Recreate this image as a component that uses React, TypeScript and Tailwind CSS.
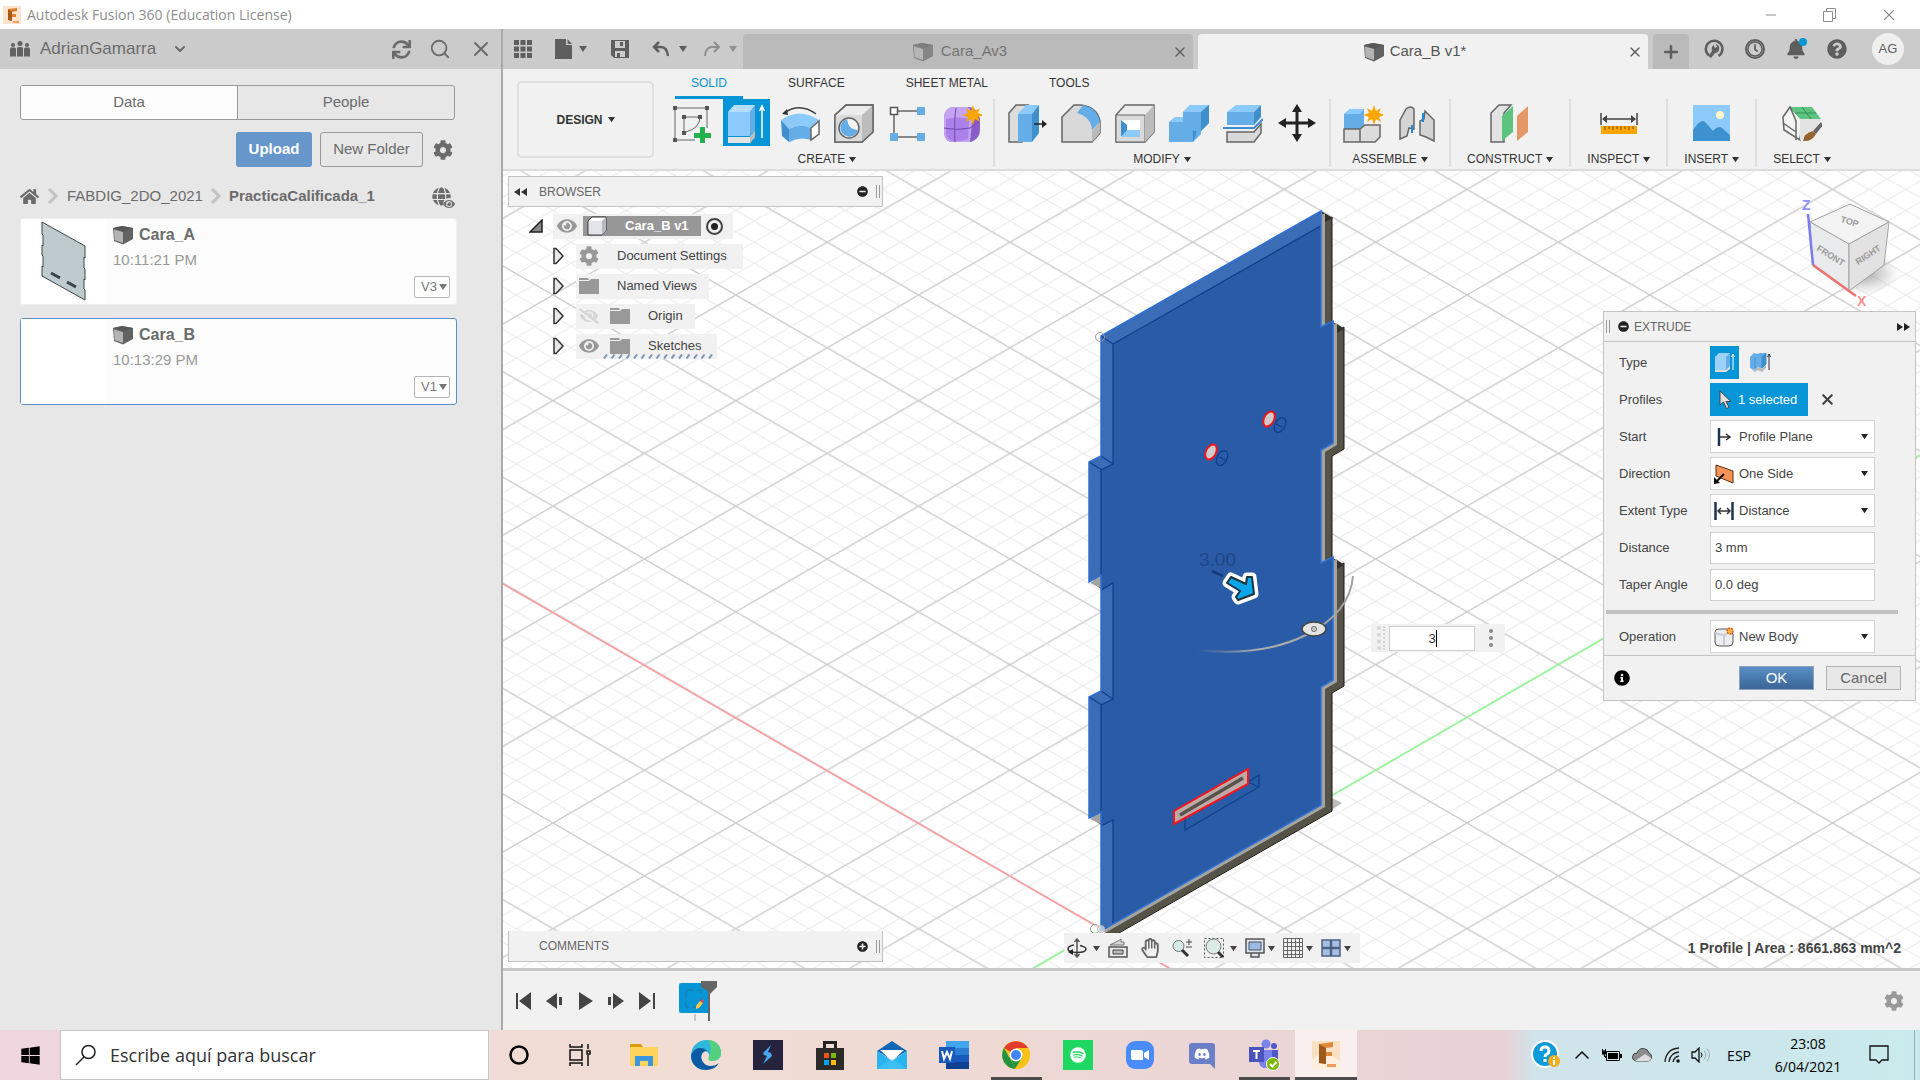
import type { ReactNode } from 'react'
import { ChevronDown, ChevronUp, Minus, Plus, Search, X } from 'lucide-react'
import {
  FaBell,
  FaCog,
  FaDiscord,
  FaEye,
  FaEyeSlash,
  FaGlobe,
  FaHome,
  FaInfoCircle,
  FaMinusCircle,
  FaPlusCircle,
  FaQuestionCircle,
  FaRegClock,
  FaRegHandPaper,
  FaSpotify,
  FaSync,
  FaWindows,
} from 'react-icons/fa'

type IconProps = { children: ReactNode; className?: string; box?: string }

function Icon({ children, className = 'size-10', box = '0 0 40 40' }: IconProps) {
  return (
    <svg viewBox={box} className={`shrink-0 ${className}`} fill="none" aria-hidden="true">
      {children}
    </svg>
  )
}

function Caret({ className = 'w-2 h-2' }: { className?: string }) {
  return (
    <Icon box="0 0 8 8" className={className}>
      <path d="M0 1h8L4 7z" fill="currentColor" />
    </Icon>
  )
}

function Cube({ className = 'size-5' }: { className?: string }) {
  return (
    <Icon box="0 0 20 20" className={className}>
      <path d="M0 3L9 1l11 2v11l-10 5.500L1 16z" fill="#626262" />
      <path d="M1 4.500l9 2.500v11L1.500 15z" fill="#b4b4b4" />
      <path d="M0 3l10 3.500L20 3 9 1z" fill="#575757" />
    </Icon>
  )
}

function Folder() {
  return (
    <Icon box="0 0 20 16" className="w-5 h-4">
      <path d="M0 0h9l1 2H0zM0 3h10l2-2h8v15H0z" fill="#999" />
    </Icon>
  )
}

function TitleBar() {
  return (
    <header className="flex h-[29px] shrink-0 items-center bg-white pl-[3px] text-[#8e8e8e]">
      <Icon box="0 0 18 18" className="size-[18px]">
        <path d="M0 0h18v18H0z" fill="#fbe3cd" />
        <path d="M5 3l9-1v3l-5 1v2h4v3H9v4l-4-1z" fill="#d9822f" />
        <path d="M5 3l4 3v9l-4-1z" fill="#a85a17" />
        <path d="M10 15h6v2h-6z" fill="#f0a35c" />
      </Icon>
      <h1 className="ml-[6px] font-['Open_Sans',sans-serif] text-[14px]">Autodesk Fusion 360 (Education License)</h1>
      <div className="ml-auto flex items-center">
        <button aria-label="Minimize" className="flex w-[58px] justify-center">
          <Minus className="size-4" strokeWidth={1.5} />
        </button>
        <button aria-label="Restore" className="flex w-[58px] justify-center">
          <Icon box="0 0 14 14" className="size-[14px]">
            <path d="M1.500 3.500h9v10h-9zM4.500 3V.5h9v10H11" stroke="currentColor" />
          </Icon>
        </button>
        <button aria-label="Close" className="flex w-[62px] justify-center">
          <X className="size-[18px]" strokeWidth={1.5} />
        </button>
      </div>
    </header>
  )
}

function FileCard({ name, time, version, active, children }: {
  name: string
  time: string
  version: string
  active?: boolean
  children?: ReactNode
}) {
  return (
    <article
      className={`flex h-[87px] rounded-[3px] border bg-[#fcfcfc] ${active ? 'border-[#5b8fce]' : 'border-[#eeeeee]'}`}
    >
      <div className="w-[86px] shrink-0 bg-white">{children}</div>
      <div className="flex flex-1 flex-col pt-[5px] pl-[6px]">
        <h2 className="flex items-center gap-[6px] text-[16px] leading-[22px] font-bold text-[#6b6b6b]">
          <Cube />
          {name}
        </h2>
        <p className="mt-[3px] text-[15px] leading-[22px] text-[#999]">{time}</p>
        <button className="mt-auto mr-[6px] mb-[6px] flex h-[22px] w-9 items-center justify-end gap-[2px] self-end rounded-[2px] border border-[#b5b5b5] bg-white pr-[2px] text-[13px] text-[#777]">
          {version}
          <Caret className="size-2" />
        </button>
      </div>
    </article>
  )
}

function DataPanel() {
  return (
    <aside className="flex w-[503px] shrink-0 flex-col border-r-2 border-[#a9a9a9] bg-[#e7e7e7] text-[#6b6b6b]">
      <div className="flex h-10 items-center bg-[#cbcbcb] pr-2 pl-[10px]">
        <Icon box="0 0 20 16" className="h-4 w-5">
          <g fill="#626262">
            <circle cx="3" cy="4" r="2" />
            <circle cx="10" cy="2.500" r="2.500" />
            <circle cx="17" cy="4" r="2" />
            <path d="M0 8q0-1.500 1.500-1.500h3Q6 6.500 6 8v7.500H0zM7 7.500Q7 6 8.500 6h3Q13 6 13 7.500v8H7zM14 8q0-1.500 1.500-1.500h3Q20 6.500 20 8v7.500h-6z" />
          </g>
        </Icon>
        <button className="ml-[10px] flex items-center gap-3 text-[17px]">
          AdrianGamarra
          <ChevronDown className="ml-1 size-4" strokeWidth={3} />
        </button>
        <div className="ml-auto flex items-center gap-[18px]">
          <button aria-label="Refresh">
            <FaSync className="size-[19px]" />
          </button>
          <button aria-label="Search">
            <Search className="size-[22px]" strokeWidth={2} />
          </button>
          <button aria-label="Close panel">
            <X className="size-6" strokeWidth={2} />
          </button>
        </div>
      </div>

      <div className="flex flex-col pr-[46px] pl-5">
        <div className="mt-4 flex h-[35px] overflow-hidden rounded-[3px] border border-[#999] text-[15px]">
          <button className="flex-1 border-r border-[#999] bg-[#fcfcfc]">Data</button>
          <button className="flex-1">People</button>
        </div>
        <div className="mt-3 flex items-center justify-end gap-2">
          <button className="h-[35px] w-[76px] rounded-[3px] bg-[#6796cb] text-[15px] font-bold text-white">Upload</button>
          <button className="h-[35px] w-[103px] rounded-[3px] border border-[#999] text-[15px]">New Folder</button>
          <button aria-label="Settings" className="mr-[2px] ml-[2px]">
            <FaCog className="size-5" />
          </button>
        </div>
        <nav className="mt-[17px] flex h-6 items-center text-[15px]">
          <a href="#" aria-label="Home">
            <FaHome className="size-[19px]" />
          </a>
          <Icon box="0 0 12 18" className="mx-2 h-[18px] w-3">
            <path d="M2 2l7 7-7 7" stroke="#c2c2c2" strokeWidth="3" />
          </Icon>
          <a href="#">FABDIG_2DO_2021</a>
          <Icon box="0 0 12 18" className="mx-[7px] h-[18px] w-3">
            <path d="M2 2l7 7-7 7" stroke="#c2c2c2" strokeWidth="3" />
          </Icon>
          <a href="#" className="font-bold">PracticaCalificada_1</a>
          <button aria-label="Open on the web" className="relative mr-1 ml-auto">
            <FaGlobe className="size-[19px]" />
            <FaEye className="absolute -right-1 -bottom-1 size-3 rounded-full bg-[#e7e7e7]" />
          </button>
        </nav>
        <div className="mt-[10px] -mr-[2px] flex flex-col gap-[13px]">
          <FileCard name="Cara_A" time="10:11:21 PM" version="V3">
            <Icon box="0 0 86 85" className="h-[85px] w-[86px]">
              <path
                d="M21 3l43 24v12l-1-1v11l1 1v11l-1-1v10l1 1v10L21 57V47l1 1V37l-1-1V26l1 1V16l-1-1z"
                fill="#bfcacf"
                stroke="#3b4447"
              />
              <path d="M30 54l9 5M46 63l9 5" stroke="#3a4346" strokeWidth="3" />
            </Icon>
          </FileCard>
          <FileCard name="Cara_B" time="10:13:29 PM" version="V1" active />
        </div>
      </div>
    </aside>
  )
}

function AppBar() {
  return (
    <div className="flex h-10 shrink-0 items-center bg-[#cbcbcb] pr-4 pl-[10px] text-[#5e5e5e]">
      <div className="flex w-[230px] shrink-0 items-center">
        <button aria-label="Show data panel">
          <Icon box="0 0 20 20" className="size-5">
            <path d="M1 1h5v5H1zM7.500 1h5v5h-5zM14 1h5v5h-5zM1 7.500h5v5H1zM7.500 7.500h5v5h-5zM14 7.500h5v5h-5zM1 14h5v5H1zM7.500 14h5v5h-5zM14 14h5v5h-5z" fill="currentColor" />
          </Icon>
        </button>
        <button aria-label="File" className="ml-[22px] flex items-center gap-[6px]">
          <Icon box="0 0 18 20" className="h-5 w-[18px]">
            <path d="M0 0h11v6h6v14H0zM12.500 0L17 5h-4.500z" fill="currentColor" />
          </Icon>
          <Caret />
        </button>
        <button aria-label="Save" className="ml-6">
          <Icon box="0 0 18 18" className="size-[18px]">
            <path d="M0 0h18v18H3l-3-3z" fill="currentColor" />
            <path d="M4 1h10v7H4zM4 11h10v6H4z" fill="#cbcbcb" />
            <path d="M9 2h3v4H9zM6 13h3v4H6z" fill="currentColor" />
          </Icon>
        </button>
        <button aria-label="Undo" className="ml-[23px] flex items-center gap-[9px]">
          <Icon box="0 0 18 18" className="size-[18px]">
            <path d="M7 2L2 7l5 5M2.500 7H9q6 0 7 9" stroke="currentColor" strokeWidth="2.500" />
          </Icon>
          <Caret />
        </button>
        <button aria-label="Redo" className="ml-4 flex items-center gap-2 text-[#8f8f8f]">
          <Icon box="0 0 18 18" className="size-[18px]">
            <path d="M11 2l5 5-5 5M15.500 7H9q-6 0-7 9" stroke="currentColor" strokeWidth="2" />
          </Icon>
          <Caret />
        </button>
      </div>
      <div className="flex flex-1 gap-[5px] self-end">
        <div className="flex h-[35px] flex-1 items-center rounded-t-[4px] bg-[#bababa] px-[5px]">
          <button className="flex flex-1 items-center justify-center gap-2 text-[15px] text-[#737373]">
            <Cube className="size-5 opacity-60" />
            Cara_Av3
          </button>
          <button aria-label="Close Cara_A">
            <X className="size-4" strokeWidth={2} />
          </button>
        </div>
        <div className="flex h-[35px] flex-1 items-center rounded-t-[4px] bg-[#f1f1f1] px-[5px]">
          <button className="flex flex-1 items-center justify-center gap-[6px] text-[15px] text-[#555]">
            <Cube className="size-5" />
            Cara_B v1*
          </button>
          <button aria-label="Close Cara_B">
            <X className="size-4" strokeWidth={2} />
          </button>
        </div>
        <button aria-label="New design" className="flex h-[35px] w-9 items-center justify-center rounded-t-[4px] bg-[#bababa]">
          <Plus className="size-5" strokeWidth={3} />
        </button>
      </div>
      <div className="ml-[15px] flex items-center gap-[21px]">
        <button aria-label="Extensions">
          <Icon box="0 0 20 20" className="size-5">
            <path d="M5 16.500A8.300 8.300 0 1 1 14.500 17" stroke="currentColor" strokeWidth="2.500" />
            <path d="M4.500 17l3.500-5q-1-4 1.500-6l1.500 3 2-1-1-3q4 1 3 6-1 3-4 3l-4 5z" fill="currentColor" />
          </Icon>
        </button>
        <button aria-label="Job status" className="rounded-full border-2 border-[#5e5e5e]">
          <FaRegClock className="size-4" />
        </button>
        <button aria-label="Notifications" className="relative">
          <FaBell className="size-5" />
          <span className="absolute -top-px -right-px size-2 rounded-full bg-[#0696d7]" />
        </button>
        <button aria-label="Help">
          <FaQuestionCircle className="size-5" />
        </button>
        <button className="ml-1 flex size-8 items-center justify-center rounded-full bg-[#efefef] text-[13px]">AG</button>
      </div>
    </div>
  )
}

const line = '#666'
const blue = '#64ade6'
const pale = '#8ccafb'
const deep = '#3f8fcd'

const create: [string, ReactNode][] = [
  ['Create Sketch', (
    <>
      <path d="M3 5h32v20M3 5v32h20" stroke={line} />
      <path d="M12 14h16M12 14v16M28 14q0 11-14 15" stroke={line} />
      <path d="M1 3h4v4H1zM33 3h4v4h-4zM1 35h4v4H1zM10 12h4v4h-4zM26 12h4v4h-4zM10 28h4v4h-4z" fill="#555" />
      <path d="M28 24h5v6h6v5h-6v6h-5v-6h-6v-5h6z" fill="#22b14c" />
    </>
  )],
  ['Extrude', (
    <>
      <path d="M2 9l6-7h21l-5 7z" fill="#b5defc" />
      <path d="M2 9h22v24H2z" fill={pale} />
      <path d="M24 9l5-7v26l-5 5z" fill={blue} />
      <path d="M2 34h22l5-6v6l-5 6H2z" fill="#e4e4e4" />
      <path d="M24 34l5-6v6l-5 6z" fill="#bdbdbd" />
      <path d="M36 35V4M33.500 8L36 3l2.500 5" stroke="#fff" strokeWidth="1.500" />
    </>
  )],
  ['Revolve', (
    <>
      <path d="M4 10Q20-1 36 11" stroke="#444" strokeWidth="1.500" />
      <path d="M2 11l5-5 1 6z" fill="#333" />
      <path d="M1 17q18-13 38 0l-8 8q-11-5-22 1z" fill={pale} />
      <path d="M1 17l8 9v13l-7-6z" fill={deep} />
      <path d="M9 26q11-6 22-1v12q-11-4-22 2z" fill={blue} />
      <path d="M31 25l8-7v13l-8 6z" fill="#fff" stroke={line} strokeWidth="1.500" />
    </>
  )],
  ['Hole', (
    <>
      <path d="M1 12L12 2h27v27L28 39H1z" fill="#ececec" stroke={line} strokeWidth="1.500" />
      <path d="M1 12h27v27H1z" fill="#dadada" />
      <path d="M28 12L39 2v27L28 39z" fill="#bcbcbc" />
      <path d="M1 12L12 2h27v27L28 39H1z" stroke={line} strokeWidth="1.500" />
      <circle cx="15" cy="25" r="10" fill="#f5f5f5" stroke={line} strokeWidth="1.500" />
      <path d="M13 16a9 9 0 1 0 11 11q-10 0-11-11z" fill={blue} />
    </>
  )],
  ['Pattern', (
    <>
      <path d="M10 8h20M6 12v22M10 34h20" stroke={line} strokeWidth="1.500" />
      <path d="M2.500 4.500h7v7h-7z" fill="#fff" stroke="#555" strokeWidth="1.500" />
      <path d="M29 4h8v8h-8zM2 30h8v8H2zM29 30h8v8h-8z" fill={blue} />
    </>
  )],
  ['Create Form', (
    <>
      <path d="M2 14Q3 5 11 4h17q8 2 10 12v12q-1 8-9 11H11q-8 0-9-9z" fill="#8a5cc9" />
      <path d="M2 14Q3 5 11 4h15q5 4 4 16l-2 19H11q-8 0-9-9z" fill="#c3a3f2" />
      <path d="M4 16q12-3 23 0l-1 20q-8 3-16 2-6-2-6-8z" fill="#ab80e8" />
      <path d="M2 25q12 3 26 0l10-7M14 5q-2 10-1 34" stroke="#7349ad" />
      <path d="M31 2l2 6 5-3-2 5 6 2-6 2 2 5-5-3-2 6-2-6-5 3 2-5-6-2 6-2-2-5 5 3z" fill="#f9a602" />
    </>
  )],
]

const modify: [string, ReactNode][] = [
  ['Press Pull', (
    <>
      <path d="M2 10l7-8h12l-6 8v29H2z" fill="#dcdcdc" stroke={line} strokeWidth="1.500" />
      <path d="M11 11l8-9h13l-7 9z" fill={pale} />
      <path d="M11 11h14v28H11z" fill={blue} />
      <path d="M25 11l7-9v28l-7 9z" fill={deep} />
      <path d="M27 21h10" stroke="#222" strokeWidth="1.500" />
      <path d="M35 17l5 4-5 4z" fill="#222" />
    </>
  )],
  ['Fillet', (
    <>
      <path d="M1 14L13 2h7q16 2 19 16v12l-8 9H1z" fill="#d9d9d9" stroke={line} strokeWidth="1.500" />
      <path d="M16 10l6-8q14 3 17 17l-8 8q-1-13-15-17z" fill={blue} />
      <path d="M31 28l8-9v11l-8 9z" fill="#b9b9b9" />
    </>
  )],
  ['Shell', (
    <>
      <path d="M1 12L10 2h29v27l-9 10H1z" fill="#ececec" stroke={line} strokeWidth="1.500" />
      <path d="M1 12h29v27H1z" fill="#dadada" stroke={line} />
      <path d="M30 12l9-10v27l-9 10z" fill="#bcbcbc" />
      <path d="M6 17h19v17H6z" fill="#fff" />
      <path d="M6 17l6 5v6l-6 6z" fill={deep} />
      <path d="M6 34l6-7h13v7z" fill={pale} />
    </>
  )],
  ['Combine', (
    <>
      <path d="M14 9l7-7h19v18l-8 8v3l-8 8H0V19l7-5h7z" fill={blue} />
      <path d="M14 9l7-7h19l-8 7zM0 19l6-5h8v5z" fill={pale} />
      <path d="M32 9l8-7v18l-8 8h-5v4l-3 7V28h8z" fill={deep} />
    </>
  )],
  ['Split Body', (
    <>
      <path d="M4 9l9-7h25l-7 7z" fill={pale} />
      <path d="M4 9h27v13H4z" fill={blue} />
      <path d="M31 9l7-7v12l-7 8z" fill={deep} />
      <path d="M0 25h31l9-9" stroke="#3a8dd6" strokeWidth="2" />
      <path d="M4 29h27l7-8v9l-7 9H4z" fill="#d9d9d9" stroke={line} strokeWidth="1.500" />
    </>
  )],
  ['Move', (
    <>
      <path d="M20 7v26M7 20h26" stroke="#222" strokeWidth="3" />
      <path d="M20 1l5 8H15zM20 39l5-8H15zM1 20l8-5v10zM39 20l-8-5v10z" fill="#222" />
    </>
  )],
]

const assemble: [string, ReactNode][] = [
  ['New Component', (
    <>
      <path d="M1 11l6-5h14v17l-4 3H1z" fill={blue} />
      <path d="M1 11l6-5h14l-4 5z" fill={pale} />
      <path d="M1 26h16v13H1zM17 26l5-4h15v12l-5 5H17z" fill="#dcdcdc" stroke={line} strokeWidth="1.500" />
      <path d="M31 2l2 6 5-3-2 5 6 2-6 2 2 5-5-3-2 6-2-6-5 3 2-5-6-2 6-2-2-5 5 3z" fill="#f9a602" />
    </>
  )],
  ['Joint', (
    <>
      <path d="M3 17l6-11q5-4 8 0v20l-5-1-2 8-7 3zM37 38l-8-4-6-2V18l4-2 1-8 9 9z" fill="#d4d4d4" stroke={line} strokeWidth="1.500" />
      <path d="M15 22v8M26 10v9" stroke="#1b8be0" strokeWidth="2" />
    </>
  )],
]

const construct: [string, ReactNode][] = [
  ['Offset Plane', (
    <>
      <path d="M1 10l8-8h12l-7 8v29H1z" fill="#e2e2e2" stroke={line} strokeWidth="1.500" />
      <path d="M12 13L23 3v26L12 38z" fill="#5cc47e" />
      <path d="M27 13L38 3v26L27 38z" fill="#e59866" />
    </>
  )],
]

const inspect: [string, ReactNode][] = [
  ['Measure', (
    <>
      <path d="M2 10v12M38 10v12M4 16h32" stroke="#444" strokeWidth="1.500" />
      <path d="M3 16l5-4v8zM37 16l-5-4v8z" fill="#444" />
      <path d="M2 23h36v8H2z" fill="#f9a602" />
      <path d="M6 23v4M10 23v3M14 23v4M18 23v3M22 23v4M26 23v3M30 23v4M34 23v3" stroke="#7b5200" />
    </>
  )],
]

const insert: [string, ReactNode][] = [
  ['Insert Image', (
    <>
      <path d="M1 2h37v36H1z" fill={pale} />
      <circle cx="28" cy="12" r="4" fill="#fdf6c6" />
      <path d="M1 27q8-12 12-8l8 9q5-6 9-3l8 7v6H1z" fill="#3c92ce" />
    </>
  )],
]

const select: [string, ReactNode][] = [
  ['Select', (
    <>
      <path d="M1 14L8 4l12 12-2 21L2 27z" fill="#f4f4f4" stroke={line} strokeWidth="1.500" />
      <path d="M18 16h21l-3 6-10 11-8 4z" fill="#e3e3e3" />
      <path d="M8 4h22l9 12H18z" fill="#5cc47e" />
      <path d="M13 10h21M20 4l9 12" stroke="#35905a" />
      <path d="M1 20l13 9M14 37V18L8 4" stroke={line} strokeWidth="1.500" />
      <path d="M39 19l-8 9 3 3 7-9z" fill="#666" />
      <path d="M31 28q-9 2-10 10 9 1 13-7z" fill="#97632c" />
    </>
  )],
]

function ToolGroup({ label, tools, pad }: { label: string; tools: [string, ReactNode][]; pad: string }) {
  return (
    <div className={`flex flex-col items-center border-r-2 border-[#dedede] ${pad} last:border-r-0`}>
      <div className="flex">
        {tools.map(([name, art]) => (
          <button key={name} aria-label={name} className="flex h-[47px] w-[54px] items-center justify-center">
            <span className={`flex h-[47px] w-[47px] items-center justify-center ${name === 'Extrude' ? 'bg-[#0696d7]' : ''}`}>
              <Icon>{art}</Icon>
            </span>
          </button>
        ))}
      </div>
      <button className="mt-[5px] flex items-center gap-1 text-[12px] leading-4 text-[#333]">
        {label}
        <Caret className="size-[7px]" />
      </button>
    </div>
  )
}

function Ribbon() {
  return (
    <div className="flex h-[102px] shrink-0 border-b-2 border-[#dcdcdc] bg-[#f1f1f1] pl-[14px] text-[#333]">
      <button className="mt-3 flex h-[77px] w-[137px] items-center justify-center gap-[5px] rounded-[5px] border-2 border-[#dfdfdf] text-[12px] font-bold">
        DESIGN
        <Caret className="size-[7px]" />
      </button>
      <div className="ml-[9px]">
        <nav className="flex h-[30px] gap-[61px] pt-[5px] pl-7 text-[12px] leading-[18px]">
          <a href="#" className="relative text-[#0696d7]">
            SOLID
            <span className="absolute -right-4 bottom-0 -left-4 h-[3px] bg-[#0696d7]" />
          </a>
          <a href="#">SURFACE</a>
          <a href="#">SHEET METAL</a>
          <a href="#">TOOLS</a>
        </nav>
        <div className="flex">
          <ToolGroup label="CREATE" tools={create} pad="pr-1 pl-[2px]" />
          <ToolGroup label="MODIFY" tools={modify} pad="px-[5px]" />
          <ToolGroup label="ASSEMBLE" tools={assemble} pad="px-[5px]" />
          <ToolGroup label="CONSTRUCT" tools={construct} pad="px-4" />
          <ToolGroup label="INSPECT" tools={inspect} pad="px-4" />
          <ToolGroup label="INSERT" tools={insert} pad="px-4" />
          <ToolGroup label="SELECT" tools={select} pad="px-4" />
        </div>
      </div>
    </div>
  )
}

const plate =
  'M1101 336L1321 211V327L1333 321V443L1321 450V563L1333 557V680L1321 687V805L1101 931V812L1089 818V697L1101 691V575L1089 582V462L1101 456Z'

const arrow = 'M1231 577L1246 584L1247 577L1252 577L1254 594L1238 600L1236 597L1240 591L1227 583Z'

function Scene() {
  return (
    <svg
      viewBox="503 171 1417 797"
      preserveAspectRatio="xMidYMid slice"
      className="absolute inset-0 size-full"
      role="img"
      aria-label="Model view"
    >
      <defs>
        <pattern id="minor" x="1467" y="295" width="36.560" height="21.120" patternUnits="userSpaceOnUse">
          <path d="M0 0L36.560 21.120M0 21.120L36.560 0" stroke="#e7e7e7" />
        </pattern>
        <pattern id="major" x="1467" y="295" width="182.800" height="105.600" patternUnits="userSpaceOnUse">
          <path d="M0 0L182.800 105.600M0 105.600L182.800 0" stroke="#cdcdcd" strokeWidth="1.200" />
        </pattern>
        <linearGradient id="arc" x1="0" x2="1">
          <stop offset="0" stopColor="#9a9a9a" stopOpacity="0" />
          <stop offset=".4" stopColor="#b0b0b0" />
          <stop offset="1" stopColor="#a0a0a0" />
        </linearGradient>
        <path id="plate" d={plate} />
        <clipPath id="face">
          <use href="#plate" />
        </clipPath>
      </defs>
      <path d="M503 171h1417v797H503z" fill="#fff" />
      <path d="M503 171h1417v797H503z" fill="url(#minor)" />
      <path d="M503 171h1417v797H503z" fill="url(#major)" />
      <path d="M503 584L1169 968" stroke="#ff9a9a" strokeWidth="1.500" />
      <path d="M1034 968L1920 455" stroke="#90fb92" strokeWidth="1.500" />
      <path d="M1330 797l12 6-12 8z" fill="#bbb" />

      <use href="#plate" x="11" y="6" fill="#565349" stroke="#15140f" />
      {[10, 9, 8, 7, 6, 5].map((n) => (
        <use key={n} href="#plate" x={n} y={n * 0.6} fill="#565349" />
      ))}
      <path d="M1321 211l12 7-8 4zM1333 322l11 7-7 4zM1333 558l11 7-7 4z" fill="#33312c" />
      <use href="#plate" x="4" y="2" fill="#a3a3a1" />
      <path d="M1090 583l11-7v12zM1090 819l11-7v12z" fill="#a3a3a1" />
      <g clipPath="url(#face)">
        <use href="#plate" fill="#3b6cb6" />
        <use href="#plate" x="12" y="8" fill="#295ba6" stroke="#11408a" strokeWidth="1.300" />
        <path d="M1101 336l12 8M1089 462l13 8M1101 456l12 8M1089 697l13 8M1101 691l12 8" stroke="#11408a" strokeWidth="1.300" />
      </g>
      <use href="#plate" stroke="#2f70d2" strokeWidth="1.500" fill="none" />

      <g stroke="#11408a" strokeWidth="1.300" fill="none">
        <ellipse cx="1280" cy="425" rx="5" ry="8" transform="rotate(28 1280 425)" />
        <ellipse cx="1222" cy="458" rx="5" ry="8" transform="rotate(28 1222 458)" />
        <path d="M1276 424l6 3M1219 457l6 3" />
        <path d="M1185 818V830L1259 787V775L1248 782L1259 787" />
      </g>
      <g stroke="#f3141c" strokeWidth="2" fill="#d0cccb">
        <ellipse cx="1269" cy="419" rx="5" ry="8" transform="rotate(28 1269 419)" />
        <ellipse cx="1211" cy="452" rx="5" ry="8" transform="rotate(28 1211 452)" />
        <path d="M1174 811L1248 769V784L1174 824Z" fill="#bdaaa6" />
      </g>
      <path d="M1180 815L1243 778" stroke="#56534c" strokeWidth="3.500" />

      <text x="1199" y="566" fontSize="19" fill="#1d4788" fontFamily="Liberation Sans, sans-serif">
        3.00
      </text>
      <path d="M1212 571l11 5" stroke="#153d7c" strokeWidth="2.500" />
      <path d="M1196 650Q1262 657 1306 635T1353 576" stroke="url(#arc)" strokeWidth="2" fill="none" />
      <ellipse cx="1314" cy="629" rx="12" ry="7" fill="#e4e4e4" stroke="#444" strokeWidth="1.500" />
      <circle cx="1314" cy="629" r="2.500" stroke="#666" fill="#ccc" />
      <g strokeLinejoin="round">
        <path d={arrow} fill="#fff" stroke="#fff" strokeWidth="9" />
        <path d={arrow} fill="#08a6ea" stroke="#1c3440" strokeWidth="2" />
      </g>
      <circle cx="1100" cy="337" r="4.500" stroke="#9a9a9a" fill="none" />
      <circle cx="1095" cy="929" r="4.500" stroke="#9a9a9a" fill="#fff" fillOpacity=".6" />
      <circle cx="1101" cy="929" r="3.500" stroke="#bbb" fill="#fff" fillOpacity=".6" />
    </svg>
  )
}

function TreeRow({ label, children, narrow }: { label: string; children: ReactNode; narrow?: boolean }) {
  return (
    <li className="flex h-[30px] items-center pl-11">
      <button aria-label={`Expand ${label}`} className="mr-[11px]">
        <Icon box="0 0 13 18" className="h-[18px] w-[13px]">
          <path d="M2 1.500v15h2l7-7.500-7-7.500z" fill="#e8e8e8" stroke="#333" strokeWidth="1.500" />
        </Icon>
      </button>
      <span
        className={`relative flex h-[25px] items-center bg-[#f1f1f1] pl-[3px] text-[13px] text-[#444] ${narrow ? 'pr-3' : 'pr-4'}`}
      >
        {children}
        <span className="ml-[18px]">{label}</span>
        {label === 'Sketches' && (
          <Icon box="0 0 112 5" className="absolute right-[2px] bottom-0 h-[5px] w-28">
            <path
              d="M1 4.500l3-4M8.500 4.500l3-4M16 4.500l3-4M23.500 4.500l3-4M31 4.500l3-4M38.500 4.500l3-4M46 4.500l3-4M53.500 4.500l3-4M61 4.500l3-4M68.500 4.500l3-4M76 4.500l3-4M83.500 4.500l3-4M91 4.500l3-4M98.500 4.500l3-4M106 4.500l3-4"
              stroke="#7d93b8"
              strokeWidth="2"
            />
          </Icon>
        )}
      </span>
    </li>
  )
}

function PanelHandle() {
  return <span className="h-[13px] w-1 border-x border-[#999]" />
}

function Browser() {
  return (
    <section>
      <div className="flex h-[31px] items-center border border-[#c2c2c2] bg-[#f1f1f1] pr-[2px] pl-[5px] text-[12px] text-[#666]">
        <Icon box="0 0 13 8" className="h-2 w-[13px]">
          <path d="M6 0v8L0 4zM13 0v8L7 4z" fill="#333" />
        </Icon>
        <h2 className="ml-3">BROWSER</h2>
        <button aria-label="Minimize browser" className="mr-2 ml-auto">
          <FaMinusCircle className="size-[11px] text-[#222]" />
        </button>
        <PanelHandle />
      </div>
      <ul className="pt-[4px]">
        <li className="flex h-[30px] items-center pl-[21px]">
          <button aria-label="Collapse Cara_B" className="mr-[10px]">
            <Icon box="0 0 14 14" className="size-[14px]">
              <path d="M13 1v12H1z" fill="#888" stroke="#222" strokeWidth="1.500" />
            </Icon>
          </button>
          <span className="flex h-[25px] items-center bg-[#f1f1f1] pr-[10px] pl-1">
            <FaEye className="size-5 text-[#999]" />
            <span className="mr-[5px] ml-[6px] flex h-5 items-center bg-[#979797] pr-3 pl-1 text-[13px] font-bold text-white">
              <Icon box="0 0 20 20" className="mr-[18px] size-5">
                <path d="M1 5l4-4h14v14l-4 4H1z" fill="#fff" stroke="#333" />
                <path d="M2 5h13v13H2z" fill="#e2e4ea" />
                <path d="M15 5l4-4v14l-4 4z" fill="#b5b9c4" />
              </Icon>
              Cara_B v1
            </span>
            <input
              type="radio"
              name="active"
              defaultChecked
              aria-label="Activate Cara_B"
              className="size-[17px] appearance-none rounded-full border-[2px] border-[#444] bg-[#222] bg-clip-content p-[3px]"
            />
          </span>
        </li>
        <TreeRow label="Document Settings">
          <FaCog className="size-5 text-[#999]" />
        </TreeRow>
        <TreeRow label="Named Views" narrow>
          <Folder />
        </TreeRow>
        <TreeRow label="Origin" narrow>
          <FaEyeSlash className="mr-[11px] size-5 text-[#d5d5d5]" />
          <Folder />
        </TreeRow>
        <TreeRow label="Sketches">
          <FaEye className="mr-[11px] size-5 text-[#999]" />
          <Folder />
        </TreeRow>
      </ul>
    </section>
  )
}

function ViewCube() {
  return (
    <svg viewBox="1797 190 110 118" className="mr-3 h-[118px] w-[110px]" fontFamily="Liberation Sans, sans-serif" aria-label="View cube" role="img">
      <defs>
        <radialGradient id="shade">
          <stop offset="0" stopColor="#777" stopOpacity=".7" />
          <stop offset="1" stopColor="#999" stopOpacity="0" />
        </radialGradient>
      </defs>
      <ellipse cx="1862" cy="272" rx="36" ry="22" fill="url(#shade)" />
      <g stroke="#a3a3a3" strokeLinejoin="round">
        <path d="M1849 203L1888 221L1848 243L1809 221Z" fill="#f3f3f3" />
        <path d="M1809 221L1848 243V290L1812 265Z" fill="#e9eaeb" />
        <path d="M1888 221L1848 243V290L1883 264Z" fill="#e2e2e3" />
      </g>
      <path d="M1807 213L1812 264" stroke="#7b7bf5" strokeWidth="2.500" />
      <path d="M1812 264L1855 295" stroke="#f07070" strokeWidth="2.500" />
      <g fontWeight="bold" fontSize="14">
        <text x="1801" y="209" fill="#8f8ff8">Z</text>
        <text x="1856" y="305" fill="#f79090">X</text>
      </g>
      <g fontSize="9" fill="#9a9a9a" fontWeight="bold">
        <text x="1839" y="221" transform="rotate(16 1839 221)">TOP</text>
        <text x="1815" y="249" transform="rotate(32 1815 249)">FRONT</text>
        <text x="1857" y="264" transform="rotate(-33 1857 264)">RIGHT</text>
      </g>
    </svg>
  )
}

function Field({ id, label, children }: { id?: string; label: string; children: ReactNode }) {
  return (
    <div className="flex h-[37px] items-center pl-[15px]">
      <label htmlFor={id} className="w-[91px] shrink-0">{label}</label>
      {children}
    </div>
  )
}

function Select({ id, value, icon }: { id: string; value: string; icon: ReactNode }) {
  return (
    <div className="flex h-[33px] w-[165px] items-center border border-[#d4d4d4] bg-white px-[3px]">
      <Icon box="0 0 20 20" className="size-5">{icon}</Icon>
      <select id={id} className="ml-[5px] flex-1 appearance-none outline-none">
        <option>{value}</option>
      </select>
      <Caret className="mr-[3px] size-[7px] text-[#222]" />
    </div>
  )
}

function ExtrudePanel() {
  return (
    <section className="mt-[2px] mr-1 w-[313px] border border-[#c4c4c4] bg-[#f1f1f1] text-[13px] text-[#444]">
      <div className="flex h-[30px] items-center border-b border-[#c4c4c4] pr-[5px] pl-[2px] text-[12px] text-[#666]">
        <PanelHandle />
        <FaMinusCircle className="mr-[5px] ml-2 size-[11px] text-[#222]" />
        <h2>EXTRUDE</h2>
        <Icon box="0 0 13 8" className="ml-auto h-2 w-[13px]">
          <path d="M0 0v8l6-4zM7 0v8l6-4z" fill="#222" />
        </Icon>
      </div>
      <div className="pt-[2px]">
        <Field label="Type">
          <button aria-label="Extrude" className="flex h-[33px] w-[29px] items-center justify-center bg-[#0696d7]">
            <Icon box="0 0 21 21" className="size-[21px]">
              <path d="M1 5l4-4h11v13l-4 4H1z" fill="#9bd1fb" />
              <path d="M12 5l4-4v13l-4 4z" fill={blue} />
              <path d="M1 18h11l4-4v3l-4 3H1z" fill="#ddd" />
              <path d="M19 18V3M17.500 5L19 2l1.500 3" stroke="#fff" />
            </Icon>
          </button>
          <button aria-label="Thin extrude" className="ml-[11px]">
            <Icon box="0 0 21 21" className="size-[21px]">
              <path d="M0 5l4-4 3 1 3-1h6v12l-4 4-4-2-3 3-5-2z" fill={blue} />
              <path d="M5 5v11M12 5v11l4-4V1z" fill={deep} stroke={deep} />
              <path d="M0 16l5 2 3-3 4 2 4-4v3l-4 4-4-2-3 2z" fill="#bbb" />
              <path d="M19 18V3M17.500 5L19 2l1.500 3" stroke="#333" />
            </Icon>
          </button>
        </Field>
        <Field label="Profiles">
          <button className="flex h-[33px] w-[98px] items-center bg-[#0696d7] pl-2 text-white">
            <Icon box="0 0 14 20" className="mr-[6px] h-5 w-[14px]">
              <path d="M2 1v14l3.500-3 3 6.500 2.500-1-3-6h5z" fill="#ddd" stroke="#444" />
            </Icon>
            1 selected
          </button>
          <button aria-label="Clear selection" className="ml-[11px]">
            <X className="size-[17px]" strokeWidth={3} />
          </button>
        </Field>
        <Field id="start" label="Start">
          <Select id="start" value="Profile Plane" icon={(
            <>
              <path d="M5 1v18" stroke="#1d3354" strokeWidth="2.500" />
              <path d="M6 10h10M12 7l4 3-4 3" stroke="#333" strokeWidth="1.500" />
            </>
          )} />
        </Field>
        <Field id="direction" label="Direction">
          <Select id="direction" value="One Side" icon={(
            <>
              <path d="M2 1l17 6v12L2 12z" fill="#f49358" stroke="#5a2c0c" />
              <path d="M2 18l8-8" stroke="#111" strokeWidth="2" />
              <path d="M0 20v-7l6 6z" fill="#111" />
            </>
          )} />
        </Field>
        <Field id="extent" label="Extent Type">
          <Select id="extent" value="Distance" icon={(
            <>
              <path d="M1.500 1v18M18.500 1v18" stroke="#1d3354" strokeWidth="2.500" />
              <path d="M4 10h12M7 7l-3 3 3 3M13 7l3 3-3 3" stroke="#333" strokeWidth="1.500" />
            </>
          )} />
        </Field>
        <Field id="distance" label="Distance">
          <input id="distance" defaultValue="3 mm" className="h-8 w-[165px] border border-[#cfcfcf] bg-white px-1" />
        </Field>
        <Field id="taper" label="Taper Angle">
          <input id="taper" defaultValue="0.0 deg" className="h-8 w-[165px] border border-[#cfcfcf] bg-white px-1" />
        </Field>
      </div>
      <hr className="mt-[7px] mr-[17px] mb-1 ml-[2px] h-1 border-0 bg-[#c2c2c2]" />
      <Field id="operation" label="Operation">
        <Select id="operation" value="New Body" icon={(
          <>
            <path d="M1 5q0-3 4-3h9l5 5v8q0 4-4 4H5q-4 0-4-4z" fill="#eceef2" stroke="#555" />
            <path d="M1 6q8 3 12 1M10 8v10" stroke="#c9ccd4" strokeWidth="2" />
            <circle cx="16" cy="4" r="3" fill="#ffb347" stroke="#d95c12" strokeWidth="1.500" strokeDasharray="2 1" />
          </>
        )} />
      </Field>
      <div className="flex h-[45px] items-center border-t border-[#c4c4c4] pr-[14px] pl-[10px] text-[15px]">
        <FaInfoCircle className="size-4 text-black" />
        <button className="ml-auto h-6 w-[75px] border border-[#8fa3ba] bg-linear-to-b from-[#5a8fc6] to-[#3a6598] text-white">OK</button>
        <button className="ml-3 h-6 w-[75px] border border-[#b0b0b0] bg-[#e8e8e8] text-[#666]">Cancel</button>
      </div>
    </section>
  )
}

function NavBar() {
  return (
    <div className="absolute bottom-[5px] left-1/2 flex h-[30px] w-[296px] -translate-x-1/2 items-center bg-[#f1f1f1] pl-[3px] text-[#444]">
      <button aria-label="Orbit" className="flex items-center gap-[6px]">
        <Icon box="0 0 20 20" className="size-5">
          <path d="M10 1v18M7.500 4L10 1l2.500 3M7.500 16l2.500 3 2.500-3" stroke="#555" strokeWidth="1.500" />
          <path d="M7 7q-6 1-6 4t9 3.500q9 0 9-3.500 0-2-6-3.500" stroke="#333" strokeWidth="1.500" />
          <path d="M1 14l5-3v6z" fill="#222" />
        </Icon>
        <Caret className="size-[7px]" />
      </button>
      <button aria-label="Look at" className="ml-2">
        <Icon box="0 0 20 20" className="size-5">
          <path d="M1 9h18v10H1z" fill="#e9e9e9" stroke="#555" strokeWidth="1.500" />
          <path d="M5 12h10v4H5z" fill="#bbb" stroke="#444" />
          <path d="M2 7l8-4 3-2v3h3v3z" stroke="#777" fill="#d8d8d8" />
        </Icon>
      </button>
      <button aria-label="Pan" className="ml-3">
        <FaRegHandPaper className="size-5 text-[#666]" />
      </button>
      <button aria-label="Zoom" className="ml-3">
        <Icon box="0 0 20 20" className="size-5">
          <circle cx="6.500" cy="8" r="5.500" fill="#d6e9e6" stroke="#777" />
          <path d="M10 12l6 6" stroke="#333" strokeWidth="3" />
          <path d="M17 1v6M14 4h6M14 9h6" stroke="#444" />
        </Icon>
      </button>
      <button aria-label="Fit" className="ml-3 flex items-center gap-[6px]">
        <Icon box="0 0 20 20" className="size-5">
          <path d="M.5.500h19v19H.5z" stroke="#555" strokeDasharray="2 2" />
          <circle cx="9.500" cy="8.500" r="7.500" fill="#dcebe8" stroke="#777" />
          <path d="M14 14l5 5" stroke="#333" strokeWidth="3" />
        </Icon>
        <Caret className="size-[7px]" />
      </button>
      <button aria-label="Display settings" className="ml-2 flex items-center gap-[3px]">
        <Icon box="0 0 20 20" className="size-5">
          <path d="M1 1h18v14H1zM6 15h8v4H6z" fill="#dfe3ea" stroke="#555" strokeWidth="1.500" />
          <path d="M4 4h12v8H4z" fill="#9db9e4" stroke="#456" />
        </Icon>
        <Caret className="size-[7px]" />
      </button>
      <button aria-label="Grid and snaps" className="ml-2 flex items-center gap-[3px]">
        <Icon box="0 0 20 20" className="size-5">
          <path d="M.5.500h19v19H.5zM4.500 1v18M8.500 1v18M12.500 1v18M16.500 1v18M1 4.500h18M1 8.500h18M1 12.500h18M1 16.500h18" stroke="#666" />
        </Icon>
        <Caret className="size-[7px]" />
      </button>
      <button aria-label="Viewports" className="ml-2 flex items-center gap-[3px]">
        <Icon box="0 0 20 20" className="size-5">
          <path d="M1 2h8.500v7.500H1zM10.500 2H19v7.500h-8.500zM1 10.500h8.500V18H1zM10.500 10.500H19V18h-8.500z" fill="#a7bfe2" stroke="#4c6184" strokeWidth="1.500" />
        </Icon>
        <Caret className="size-[7px]" />
      </button>
    </div>
  )
}

function Viewport() {
  return (
    <main className="relative flex flex-1 overflow-hidden border-b-[3px] border-[#c9c9c9]">
      <Scene />
      <div className="relative ml-[5px] flex w-[375px] flex-col justify-between pt-[5px] pb-[6px]">
        <Browser />
        <div className="flex h-[31px] items-center border border-t-0 border-[#c2c2c2] bg-[#f1f1f1] pr-[2px] pl-[30px] text-[12px] text-[#666]">
          <h2>COMMENTS</h2>
          <button aria-label="Add comment" className="mr-2 ml-auto">
            <FaPlusCircle className="size-[11px] text-[#222]" />
          </button>
          <PanelHandle />
        </div>
      </div>
      <div className="absolute top-[453px] left-[868px] flex h-7 w-[134px] items-center bg-[#f1f1f1]">
        <span className="mr-1 ml-[6px] h-6 w-2 border-r-2 border-l-4 border-dotted border-[#d6d6d6]" />
        <div className="relative">
          <input
            aria-label="Distance value"
            defaultValue="3"
            className="block h-[25px] w-[86px] border border-[#cfcfcf] bg-white text-center text-[13px] text-[#333]"
          />
          <span className="absolute top-1 left-[47px] h-[17px] w-px bg-black" />
        </div>
        <Icon box="0 0 4 18" className="ml-[14px] h-[18px] w-1">
          <path d="M0 2a2 2 0 0 1 4 0 2 2 0 0 1-4 0zM0 9a2 2 0 0 1 4 0 2 2 0 0 1-4 0zM0 16a2 2 0 0 1 4 0 2 2 0 0 1-4 0z" fill="#888" />
        </Icon>
      </div>
      <NavBar />
      <div className="relative ml-auto flex flex-col items-end pt-5">
        <ViewCube />
        <ExtrudePanel />
        <p className="mt-auto mr-[19px] mb-[11px] text-[14px] leading-[18px] font-bold text-[#444]">1 Profile | Area : 8661.863 mm^2</p>
      </div>
    </main>
  )
}

const playback = [
  ['Go to start', 'M1 2h2v16H1zM16 1v18L4 10z'],
  ['Step back', 'M11 2v16L0 10zM13 6h3v8h-3z'],
  ['Play', 'M2 1v18l14-9z'],
  ['Step forward', 'M5 2v16l11-8zM0 6h3v8H0z'],
  ['Go to end', 'M14 2h2v16h-2zM0 1v18l12-9z'],
]

function Timeline() {
  return (
    <div className="flex h-[59px] shrink-0 items-center bg-[#f1f1f1] pr-4 pl-3 text-[#444]">
      <div className="flex gap-[15px]">
        {playback.map(([name, d]) => (
          <button key={name} aria-label={name}>
            <Icon box="0 0 16 20" className="h-5 w-4">
              <path d={d} fill="currentColor" />
            </Icon>
          </button>
        ))}
      </div>
      <Icon box="0 0 38 40" className="ml-6 h-10 w-[38px]">
        <path d="M0 4q0-2 2-2h28v30H2q-2 0-2-2z" fill="#0696d7" />
        <path d="M7 9h15v17H7z" stroke="#2475a5" strokeDasharray="8 3" />
        <path d="M17 25l4-5 3 2-4 5-3 1z" fill="#f7c948" />
        <path d="M21 20l3 2 1-2-2-2z" fill="#e0475b" />
        <path d="M16 33v7" stroke="#bbb" strokeWidth="1.500" />
        <path d="M22 0h16v6l-7 7v27h-2V10l-7-4z" fill="#666" />
      </Icon>
      <button aria-label="Timeline settings" className="ml-auto">
        <FaCog className="size-5 text-[#999]" />
      </button>
    </div>
  )
}

const apps: [string, ReactNode, string?][] = [
  ['Cortana', <circle key="c" cx="15" cy="16" r="8.500" stroke="#000" strokeWidth="2.500" />],
  ['Task View', (
    <path key="t" d="M4 11h12v10H4zM4 5v3h12V5M4 27v-3h12v3M22 5v5M22 16v11M21 12h3v3h-3z" stroke="#111" strokeWidth="1.500" />
  )],
  ['File Explorer', (
    <>
      <path d="M2 5h11l2 3H2z" fill="#d99a06" />
      <path d="M2 8h28v19H2z" fill="#ffd35c" />
      <path d="M7 27V17h18v10h-5v-5h-8v5z" fill="#3b96dd" />
    </>
  )],
  ['Edge', (
    <>
      <path d="M1 17C1 7 8 1 17 1s14 6 14 13c0 6-5 8-9 8-3 0-4-2-3-4 2-6-9-9-13-3-4 6 2 15 9 16C7 31 1 25 1 17z" fill="#2fb8dc" />
      <path d="M17 1c9 0 14 6 14 13 0 6-5 8-9 8-3 0-4-2-3-4 3-6 2-14-2-17z" fill="#53d07d" />
      <path d="M1 17c2-9 12-10 16-5-6 0-7 7-4 11 3 5 11 5 16 1-3 5-8 7-13 7C8 31 1 25 1 17z" fill="#0c59a4" />
    </>
  )],
  ['Streamlabs', (
    <>
      <path d="M1 1h30v30H1z" fill="#26233f" />
      <path d="M19 6l-8 8 1 2 3 1-1 2-3 6 9-8-1-3-3-1z" fill="#49a5f2" />
    </>
  )],
  ['Microsoft Store', (
    <>
      <path d="M9 10V2h14v8h-3V5h-8v5z" fill="#222" />
      <path d="M2 9h28v22H2z" fill="#2d2b2a" />
      <path d="M10 14h5v5h-5z" fill="#f25022" />
      <path d="M17 14h5v5h-5z" fill="#7fba00" />
      <path d="M10 21h5v5h-5z" fill="#00a4ef" />
      <path d="M17 21h5v5h-5z" fill="#ffb900" />
    </>
  )],
  ['Mail', (
    <>
      <path d="M1 12L16 2l15 10-15 9z" fill="#0f67b5" />
      <path d="M4 11h24L16 22z" fill="#fff" />
      <path d="M1 12l15 10 15-10v18H1z" fill="#28b4ee" />
      <path d="M1 30l15-10 15 10z" fill="#49c8f7" fillOpacity=".6" />
    </>
  )],
  ['Word', (
    <>
      <path d="M8 2h23v8H8z" fill="#41a5ee" />
      <path d="M8 9h23v7H8z" fill="#2b7cd3" />
      <path d="M8 16h23v7H8z" fill="#185abd" />
      <path d="M8 23h23v7H8z" fill="#103f91" />
      <path d="M1 8h16v16H1z" fill="#1858b8" />
      <path d="M4 12l2 8 3-7 3 7 2-8" stroke="#fff" strokeWidth="2" />
    </>
  )],
  ['Chrome', (
    <>
      <circle cx="16" cy="16" r="14" fill="#fbc116" />
      <path d="M16 16L4 9A14 14 0 0 1 28 9H16z" fill="#e33b2e" />
      <path d="M4 9l8 14 3 7A14 14 0 0 1 4 9z" fill="#229342" />
      <path d="M10 18l5 12 7-11z" fill="#229342" />
      <path d="M22 19l-7 11A14 14 0 0 0 28 9H17z" fill="#fbc116" />
      <circle cx="16" cy="16" r="6.500" fill="#fff" />
      <circle cx="16" cy="16" r="5" fill="#4285f4" />
    </>
  ), 'open'],
  ['Spotify', (
    <>
      <path d="M1 1h30v30H1z" fill="#1ed760" />
      <FaSpotify x="8" y="8" size={16} color="#fff" />
    </>
  )],
  ['Zoom', (
    <>
      <rect x="2" y="2" width="28" height="28" rx="9" fill="#4a8cff" />
      <path d="M7 11h10q2 0 2 2v8H9q-2 0-2-2zM20 14l5-3v10l-5-3z" fill="#fff" />
    </>
  )],
  ['Discord', (
    <>
      <path d="M6 4h20q3 0 3 3v23l-5-5H6q-3 0-3-3V7q0-3 3-3z" fill="#6a7fc8" />
      <FaDiscord x="8" y="7" size={16} color="#fff" />
    </>
  )],
  ['Teams', (
    <>
      <circle cx="18" cy="5" r="4.500" fill="#7b83eb" />
      <circle cx="26" cy="7" r="3" fill="#5059c9" />
      <path d="M11 11h13v12q-3 6-8 6-5-1-5-7z" fill="#7b83eb" />
      <path d="M24 11h6v9q-2 4-6 3z" fill="#5059c9" />
      <path d="M1 8h15v15H1z" fill="#4b53bc" />
      <path d="M5 12h7M8.500 12v8" stroke="#fff" strokeWidth="2" />
      <circle cx="25" cy="25" r="6.500" fill="#7ab800" stroke="#fff" />
      <path d="M22 25l2.500 2.500L28.500 23" stroke="#fff" strokeWidth="2" />
    </>
  ), 'open'],
  ['Fusion 360', (
    <>
      <path d="M2 2h28v28H2z" fill="#fbe0c4" />
      <path d="M2 20l12-8 16 10v8H2z" fill="#fdeede" />
      <path d="M9 5l14-2v5l-7 1v4h6v4h-6v8l-7-1z" fill="#e08a3c" />
      <path d="M9 5l7 4v16l-7-1z" fill="#9c5a1d" />
      <path d="M17 25h9v3h-9z" fill="#eb9c58" />
    </>
  ), 'current'],
]

function Taskbar() {
  return (
    <footer className="flex h-[50px] shrink-0 items-center font-['Open_Sans',sans-serif] text-black">
      <div className="flex h-full flex-1 items-center bg-linear-to-r from-[#efd5de] via-[#f1ddd3] via-45% to-[#e8d2d6]">
        <button aria-label="Start" className="flex h-full w-[60px] items-center justify-center">
          <FaWindows className="size-[21px]" />
        </button>
        <label className="flex h-full w-[429px] items-center border border-[#c6c6c6] bg-white pl-[14px]">
          <Icon box="0 0 22 22" className="mr-[13px] size-[22px]">
            <circle cx="13.500" cy="8" r="6.500" stroke="#222" strokeWidth="1.500" />
            <path d="M9 13l-8 8" stroke="#222" strokeWidth="1.500" />
          </Icon>
          <input
            aria-label="Buscar"
            placeholder="Escribe aquí para buscar"
            className="flex-1 text-[18px] outline-none placeholder:text-[#333]"
          />
        </label>
        {apps.map(([name, art, state]) => (
          <button
            key={name}
            aria-label={name}
            className={`flex h-full w-[62px] flex-col items-center ${state === 'current' ? 'bg-[#f9efee]' : ''}`}
          >
            <span className="flex h-[47px] items-center pt-[2px]">
              <Icon box="0 0 32 32" className="size-8">{art}</Icon>
            </span>
            {state && <span className={`h-[3px] bg-[#4c4c4c] ${state === 'open' ? 'w-[51px]' : 'w-full'}`} />}
          </button>
        ))}
      </div>
      <div className="flex h-full items-center bg-linear-to-r from-[#e8d2d6] from-5% via-[#cfe3ea] via-12% to-[#c9eaec] pl-12">
        <button aria-label="Support" className="relative">
          <Icon box="0 0 30 30" className="size-[30px]">
            <circle cx="14" cy="14" r="13" fill="#0d9ad9" stroke="#fff" strokeWidth="2" />
            <path d="M10 11q0-4 4-4t4 4q0 2-2 3t-2 3M14 19v3" stroke="#fff" strokeWidth="3" />
            <circle cx="23" cy="21" r="6" fill="#f5ac1c" />
            <path d="M23 20v5M23 17v2" stroke="#fff" strokeWidth="2" />
          </Icon>
        </button>
        <button aria-label="Show hidden icons" className="ml-[9px]">
          <ChevronUp className="size-6" strokeWidth={1.5} />
        </button>
        <Icon box="0 0 20 14" className="ml-2 h-[14px] w-5">
          <path d="M4.500 3.500h13v9h-13z" stroke="#000" />
          <path d="M6 5h10v6H6zM18 6h2v4h-2z" fill="#000" />
          <path d="M0 3h4v3H0zM.5 1v2M3.500 1v2M2 6q0 4 3 4" stroke="#000" fill="#000" />
        </Icon>
        <Icon box="0 0 20 14" className="ml-[10px] h-[14px] w-5">
          <path d="M4 13q-4-1-3.500-4.500T5 5q2-5 6.500-4.500T17 5q3 1 2.500 4.500T16 13z" fill="#8d8d8d" stroke="#444" />
          <path d="M3 13l10-7 6 4q0 3-3 3z" fill="#dedede" />
        </Icon>
        <Icon box="0 0 16 16" className="ml-3 size-4">
          <path d="M1 15Q2 2 15 1M5 15q1-9 10-10M9 15q1-5 6-6" stroke="#222" strokeWidth="1.300" />
          <circle cx="14" cy="14" r="1.800" fill="#111" />
        </Icon>
        <Icon box="0 0 20 16" className="ml-[11px] h-4 w-5">
          <path d="M1 5h3l4-4v14l-4-4H1z" stroke="#111" strokeWidth="1.300" />
          <path d="M10 5.500q2 2.500 0 5" stroke="#111" />
          <path d="M13 3.500q3.500 4.500 0 9M16 1.500q5 6.500 0 13" stroke="#9aabad" />
        </Icon>
        <span className="ml-4 text-[14px]">ESP</span>
        <time className="ml-5 w-[74px] text-center text-[14px] leading-[23px]">
          23:08
          <br />
          6/04/2021
        </time>
        <button aria-label="Notifications" className="ml-6">
          <Icon box="0 0 20 20" className="size-5">
            <path d="M1 1h18v14h-6l-3 3-3-3H1z" stroke="#111" strokeWidth="1.300" />
          </Icon>
        </button>
        <span className="mr-[5px] ml-[25px] h-full w-px bg-[#9ab0b3]" />
      </div>
    </footer>
  )
}

export default function App() {
  return (
    <div className="flex min-h-screen flex-col bg-white font-['Liberation_Sans',Arial,sans-serif]">
      <TitleBar />
      <div className="flex flex-1">
        <DataPanel />
        <div className="flex min-w-0 flex-1 flex-col">
          <AppBar />
          <Ribbon />
          <Viewport />
          <Timeline />
        </div>
      </div>
      <Taskbar />
    </div>
  )
}
